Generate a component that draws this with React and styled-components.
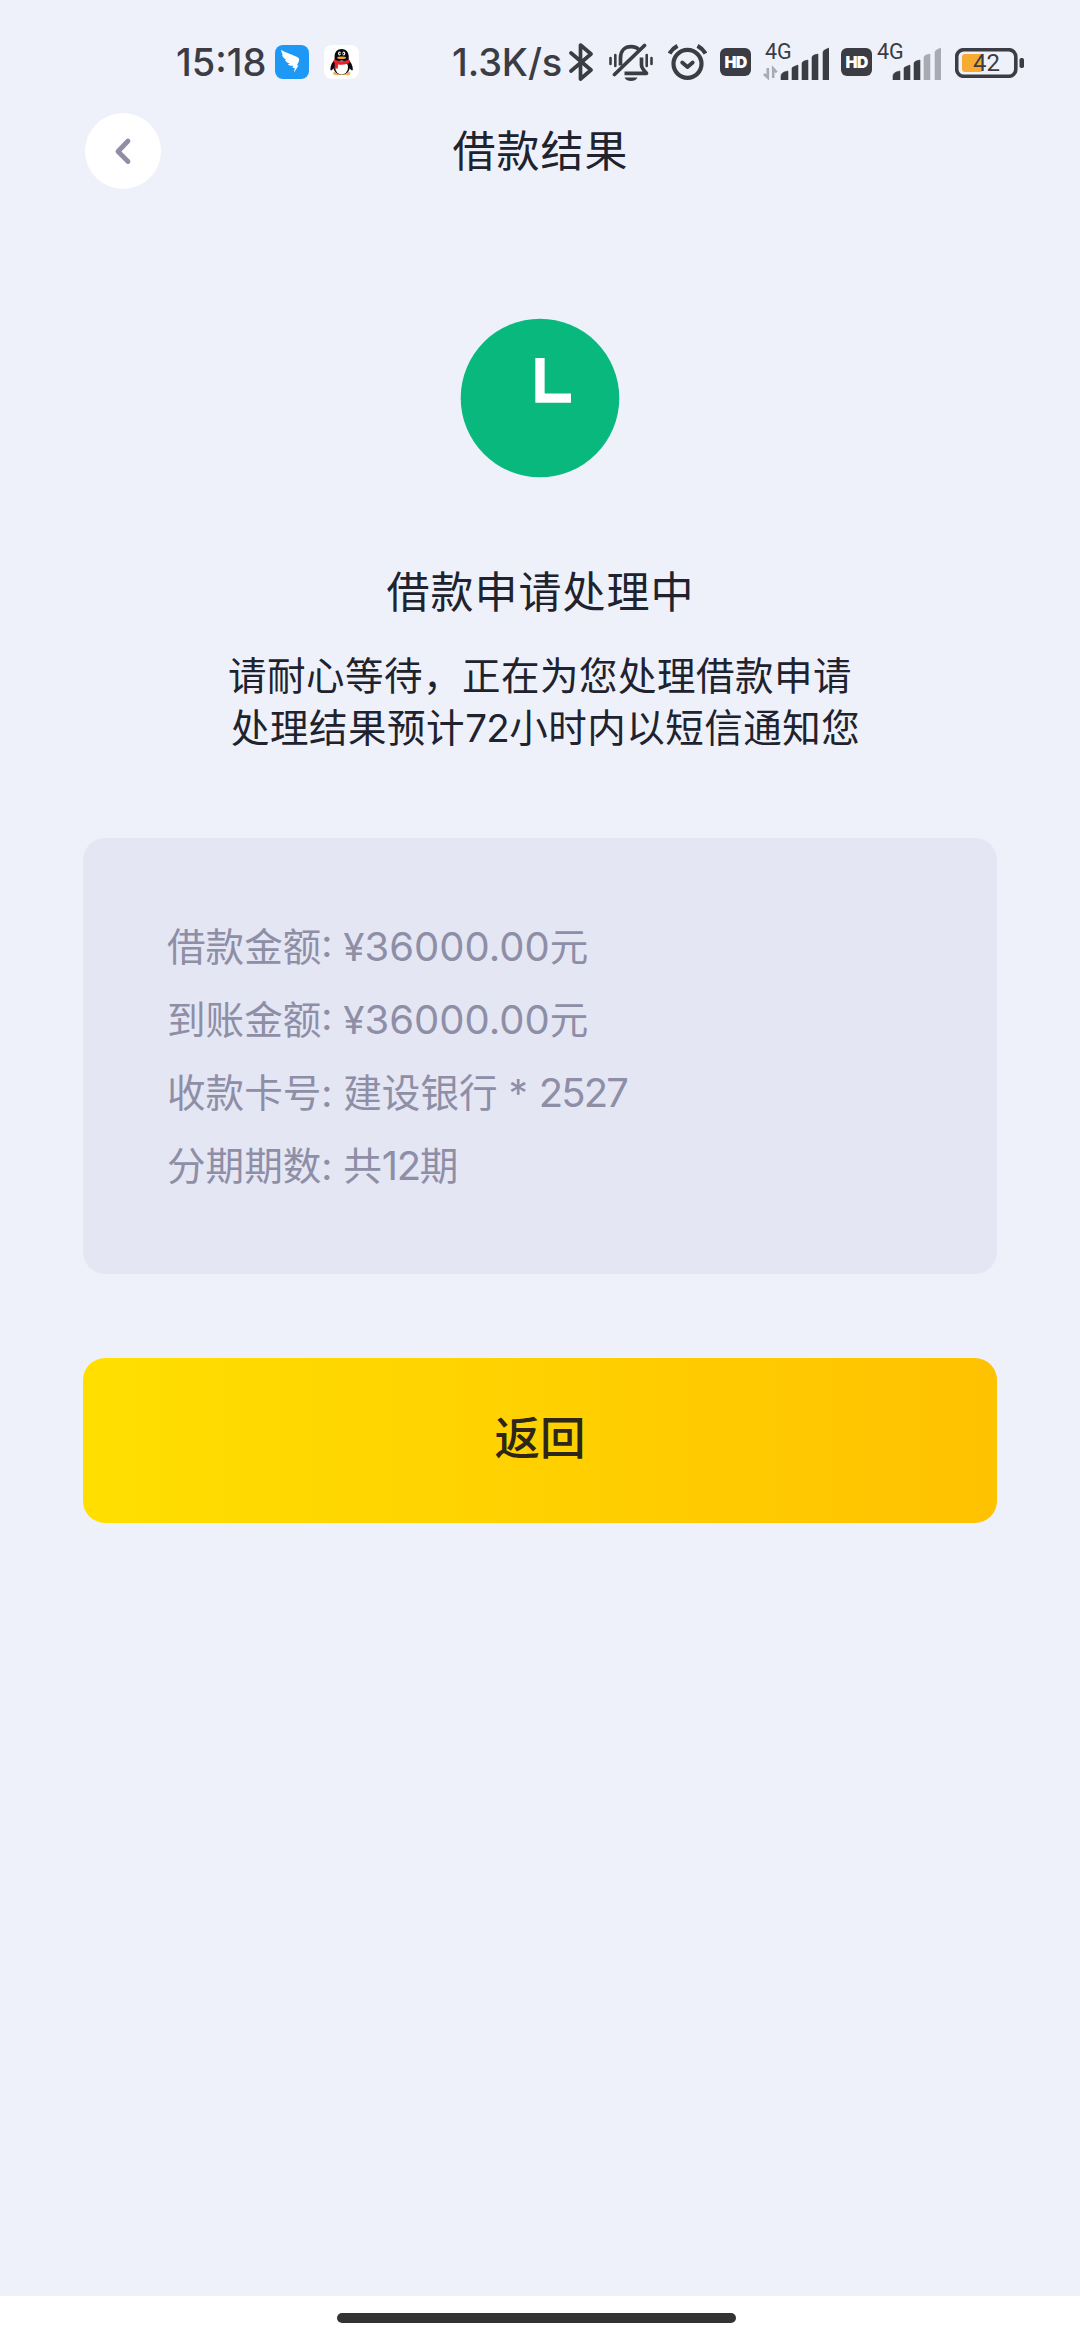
import React from "react";
import styled, { createGlobalStyle } from "styled-components";

const ink = "#3b3c44";

const GlobalStyle = createGlobalStyle`
  *, *::before, *::after { box-sizing: border-box; }
  body {
    margin: 0;
    background: #eef1fa;
    font-family: Inter, "Noto Sans CJK SC", sans-serif;
    color: #20222e;
  }
`;

const Screen = styled.div`
  display: flex;
  flex-direction: column;
  width: 1080px;
  height: 2340px;
  overflow: hidden;
  background: #eef1fa;
`;

const StatusBar = styled.header`
  display: flex;
  align-items: center;
  flex: none;
  height: 100px;
  padding: 24px 55px 0 176px;
  color: ${ink};
`;

const StatusText = styled.span`
  flex: none;
  width: ${(p) => p.$width}px;
  margin-left: ${(p) => p.$before || 0}px;
  font-size: 38px;
  line-height: 48px;
  font-weight: 500;
  letter-spacing: ${(p) => p.$tracking || 0}px;
  white-space: nowrap;
`;

const StatusIcon = styled.svg`
  flex: none;
  display: block;
  margin-left: ${(p) => p.$before || 0}px;
`;

const HdBadge = styled.span`
  display: flex;
  align-items: center;
  justify-content: center;
  flex: none;
  width: 31px;
  height: 28px;
  margin-left: ${(p) => p.$before}px;
  border-radius: 6px;
  background: ${ink};
  color: #fff;
  font-size: 16px;
  font-weight: 900;
  line-height: 28px;
  letter-spacing: -0.7px;
`;

const Signal = styled.div`
  display: grid;
  grid-template-rows: 15px 21px;
  flex: none;
  width: ${(p) => p.$width}px;
  height: 36px;
  margin-left: ${(p) => p.$before}px;
`;

const Network = styled.span`
  grid-area: 1 / 1;
  padding-left: ${(p) => p.$inset || 0}px;
  font-family: Roboto, sans-serif;
  font-size: 21.5px;
  line-height: 15px;
`;

const SignalBars = styled.svg`
  grid-area: 1 / 1 / 3 / 2;
  display: block;
`;

const Battery = styled.div`
  display: grid;
  align-items: center;
  flex: none;
  width: 70px;
  height: 30px;
  margin-left: 14px;
`;

const BatteryShape = styled.svg`
  grid-area: 1 / 1;
  display: block;
`;

const BatteryLevel = styled.span`
  grid-area: 1 / 1;
  width: 63px;
  padding-top: 1px;
  text-align: center;
  font-family: Roboto, sans-serif;
  font-size: 24px;
  line-height: 30px;
`;

const NavBar = styled.nav`
  display: grid;
  grid-template-columns: 76px 1fr 76px;
  align-items: center;
  flex: none;
  height: 102px;
  padding: 0 85px;
`;

const BackButton = styled.button`
  display: flex;
  align-items: center;
  justify-content: center;
  width: 76px;
  height: 76px;
  padding: 0;
  border: 0;
  border-radius: 50%;
  background: #fff;
`;

const NavTitle = styled.h1`
  margin: 0;
  padding-left: 1px;
  text-align: center;
  font-size: 43px;
  line-height: 60px;
  font-weight: 400;
  letter-spacing: 1px;
`;

const Main = styled.main`
  display: flex;
  flex-direction: column;
  flex: 1;
  padding: 116px 83px 0;
`;

const ClockMark = styled.svg`
  display: block;
  align-self: center;
  flex: none;
`;

const Heading = styled.h2`
  margin: 84px 0 0;
  padding-left: 1px;
  text-align: center;
  font-size: 43px;
  line-height: 60px;
  font-weight: 400;
  letter-spacing: 1px;
`;

const Message = styled.div`
  margin-top: 28px;
  text-align: center;
  font-size: 38.5px;
  line-height: 52px;
  letter-spacing: 0.5px;
`;

const MessageLine = styled.p`
  margin: 0;
  height: 52px;
  white-space: pre;
`;

const Figure = styled.span`
  font-size: ${(p) => p.$size}px;
  letter-spacing: ${(p) => p.$tracking || 0}px;
`;

const DetailCard = styled.section`
  display: grid;
  grid-auto-rows: 73px;
  height: 436px;
  margin-top: 84px;
  padding: 72px 84px;
  border-radius: 22px;
  background: #e4e6f4;
`;

const DetailRow = styled.div`
  color: #8e8ea6;
  font-size: 38.6px;
  line-height: 73px;
  white-space: pre;
`;

const ReturnButton = styled.button`
  height: 165px;
  margin-top: 84px;
  padding: 0 0 3px;
  border: 0;
  border-radius: 22px;
  background: linear-gradient(90deg, #ffdf00, #ffc200);
  color: #2e2616;
  font-family: inherit;
  font-size: 45.5px;
  line-height: 60px;
  font-weight: 500;
`;

const GestureArea = styled.footer`
  display: flex;
  justify-content: center;
  flex: none;
  height: 44px;
  padding-top: 17px;
  background: #fff;
`;

const GestureBar = styled.div`
  width: 399px;
  height: 10px;
  margin-left: -7px;
  border-radius: 5px;
  background: #333;
`;

const barPaths = [
  "M0 36v-4q0-4 7-5v9z",
  "M11 36V24q0-1 6-3v15z",
  "M21 36V19q0-2 6-3v20z",
  "M31 36V13q0-2 6-3v26z",
  "M42 36V8q0-2 6-4v32z",
];

function Bars({ offset, active, children }) {
  return (
    <SignalBars width={offset + 48} height="36" viewBox={`0 0 ${offset + 48} 36`}>
      {children}
      <g transform={`translate(${offset} 0)`}>
        {barPaths.map((d, i) => (
          <path
            key={d}
            d={d}
            fill={i < active ? ink : "#a9aab3"}
            stroke={i < active ? ink : "#a9aab3"}
            strokeWidth="0.6"
            strokeLinejoin="round"
          />
        ))}
      </g>
    </SignalBars>
  );
}

const details = [
  { label: "借款金额", before: "¥", figure: "36000.00", after: "元" },
  { label: "到账金额", before: "¥", figure: "36000.00", after: "元" },
  { label: "收款卡号", before: "建设银行 * ", figure: "2527", tracking: -1.8 },
  { label: "分期期数", before: "共", figure: "12", tracking: -1.4, after: "期" },
];

export default function App() {
  return (
    <Screen>
      <GlobalStyle />
      <StatusBar>
        <StatusText $width={99}>15:18</StatusText>
        <StatusIcon width="34" height="34" viewBox="0 0 34 34">
          <rect width="34" height="34" rx="8" fill="#1e98f5" />
          <path
            d="M6.200 4.700C10.500 8 18 9.500 22.500 12.200c1.800 1.100 2 2.400 1.300 4.200l-1.900 4.200h1.700L18.800 27.800l1-4.900h-2.400l.8-2.200c-2.200.5-3.900-.1-5.400-1.500l2.200-.4c-2.700-.9-4.300-2.100-5.100-4.100l1.700.1C8.700 13.700 7.300 11.500 7 9.200l1.100.5C6.800 8.200 6.200 6.600 6.200 4.700z"
            fill="#fff"
          />
        </StatusIcon>
        <StatusIcon $before={15} width="35" height="34" viewBox="0 0 35 34">
          <rect width="35" height="34" rx="8" fill="#fff" />
          <path d="M9 28.500c0-1.800 3-2.500 5.500-2.500h6c2.500 0 6 .7 6 2.500s-3 2-5 1.500h-7c-2 .5-5.500.3-5.500-1.500z" fill="#eeb65c" />
          <path
            d="M17.600 3.900c-4.300 0-7 3.200-7 7.300v3.200C8.300 17.400 6.400 20.500 6.400 24c0 2.300 1.200 1.700 3-.8 1.300 4 4 6.300 8.200 6.300s7-2.300 8.200-6.300c1.900 2.500 3 3.100 3 .8 0-3.500-1.900-6.600-4.100-9.600v-3.200c0-4.100-2.800-7.300-7.100-7.300z"
            fill="#08090c"
          />
          <ellipse cx="17.600" cy="22.500" rx="6.400" ry="7" fill="#fff" />
          <path d="M10.300 14.300c4 2.600 10.500 2.600 14.700 0l1 3c-3.500 2.500-8.200 2.900-12 2.100l-.2 4.100h-3.400l.5-5.200-1.400-1z" fill="#e3242b" />
          <ellipse cx="15.500" cy="8.400" rx="1.400" ry="2" fill="#fff" />
          <ellipse cx="19.800" cy="8.400" rx="1.400" ry="2" fill="#fff" />
          <circle cx="15.900" cy="8.600" r=".8" fill="#111" />
          <circle cx="19.400" cy="8.600" r=".8" fill="#111" />
          <ellipse cx="17.600" cy="12.700" rx="4.500" ry="1.300" fill="#f4a43c" />
        </StatusIcon>

        <StatusText $before={93} $width={117} $tracking={-0.1}>1.3K/s</StatusText>
        <StatusIcon width="25" height="38" viewBox="0 0 25 38">
          <path
            d="M2 10l20 17-10.500 9V2L22 11 2 28"
            fill="none"
            stroke={ink}
            strokeWidth="3.700"
            strokeLinecap="round"
            strokeLinejoin="round"
          />
        </StatusIcon>
        <StatusIcon $before={15} width="44" height="38" viewBox="0 0 44 38">
          <g fill="none" stroke={ink} strokeWidth="3.700" strokeLinejoin="round">
            <path d="M11.500 22.500V15C11.500 7.500 16 3.700 22 3.700c3.700 0 6.500 1.300 8.300 3.500" />
            <path d="M32.500 14.500V22c0 3 2 5 5 8.300H15.500" />
            <path d="M5.500 31.500L35.500 2.500" strokeLinecap="round" />
            <path d="M1.500 15v6M6.300 12v11M37.700 12v11M42.500 15v6" strokeWidth="2.600" strokeLinecap="round" />
          </g>
          <path d="M15.500 34.500h13c-1.500 2.600-3.500 3.500-6.500 3.500s-5-.9-6.500-3.500z" fill={ink} />
        </StatusIcon>
        <StatusIcon $before={15} width="39" height="38" viewBox="0 0 39 38">
          <g fill="none" stroke={ink} strokeLinejoin="round">
            <circle cx="19.500" cy="20.800" r="14" strokeWidth="4.200" />
            <path d="M14.200 19.500l5.300 4.500 5.200-4.500" strokeWidth="3.800" strokeLinecap="round" />
            <path d="M1.500 10.500Q4.300 5.500 9.500 2.800M37.500 10.500Q34.700 5.500 29.500 2.800" strokeWidth="4.200" />
          </g>
        </StatusIcon>
        <HdBadge $before={13}>HD</HdBadge>
        <Signal $before={11} $width={68}>
          <Network $inset={3}>4G</Network>
          <Bars offset={19} active={5}>
            <path d="M5.800 24v9.500L2 30M11.200 34V24.500l3.500 3.800" fill="none" stroke="#a9aab3" strokeWidth="2.600" />
          </Bars>
        </Signal>
        <HdBadge $before={11}>HD</HdBadge>
        <Signal $before={5} $width={64}>
          <Network>4G</Network>
          <Bars offset={16} active={3} />
        </Signal>
        <Battery>
          <BatteryShape width="70" height="30" viewBox="0 0 70 30">
            <rect x="1.700" y="1.700" width="59.100" height="26.600" rx="7" fill="none" stroke={ink} strokeWidth="3.600" />
            <rect x="7" y="6" width="21" height="18" rx="3" fill="#f7ab32" />
            <rect x="64.500" y="10" width="4.500" height="10" rx="1.800" fill={ink} />
          </BatteryShape>
          <BatteryLevel>42</BatteryLevel>
        </Battery>
      </StatusBar>

      <NavBar>
        <BackButton aria-label="返回">
          <svg width="20" height="30" viewBox="0 0 20 30">
            <path
              d="M15 5L5 15.500l10 10"
              fill="none"
              stroke="#8f8ea5"
              strokeWidth="4.800"
              strokeLinecap="round"
              strokeLinejoin="round"
            />
          </svg>
        </BackButton>
        <NavTitle>借款结果</NavTitle>
      </NavBar>

      <Main>
        <ClockMark width="160" height="160" viewBox="0 0 160 160">
          <circle cx="80" cy="80" r="79.300" fill="#09b87d" />
          <path d="M80 40v40.200h31" fill="none" stroke="#fff" strokeWidth="9.300" />
        </ClockMark>
        <Heading>借款申请处理中</Heading>
        <Message>
          <MessageLine>请耐心等待，正在为您处理借款申请</MessageLine>
          <MessageLine>
            {" 处理结果预计"}
            <Figure $size={38.5} $tracking={-0.6}>72</Figure>
            {"小时内以短信通知您"}
          </MessageLine>
        </Message>
        <DetailCard>
          {details.map(({ label, before, figure, tracking, after }) => (
            <DetailRow key={label}>
              {`${label}: ${before}`}
              <Figure $size={40} $tracking={tracking}>{figure}</Figure>
              {after}
            </DetailRow>
          ))}
        </DetailCard>
        <ReturnButton>返回</ReturnButton>
      </Main>

      <GestureArea>
        <GestureBar />
      </GestureArea>
    </Screen>
  );
}
